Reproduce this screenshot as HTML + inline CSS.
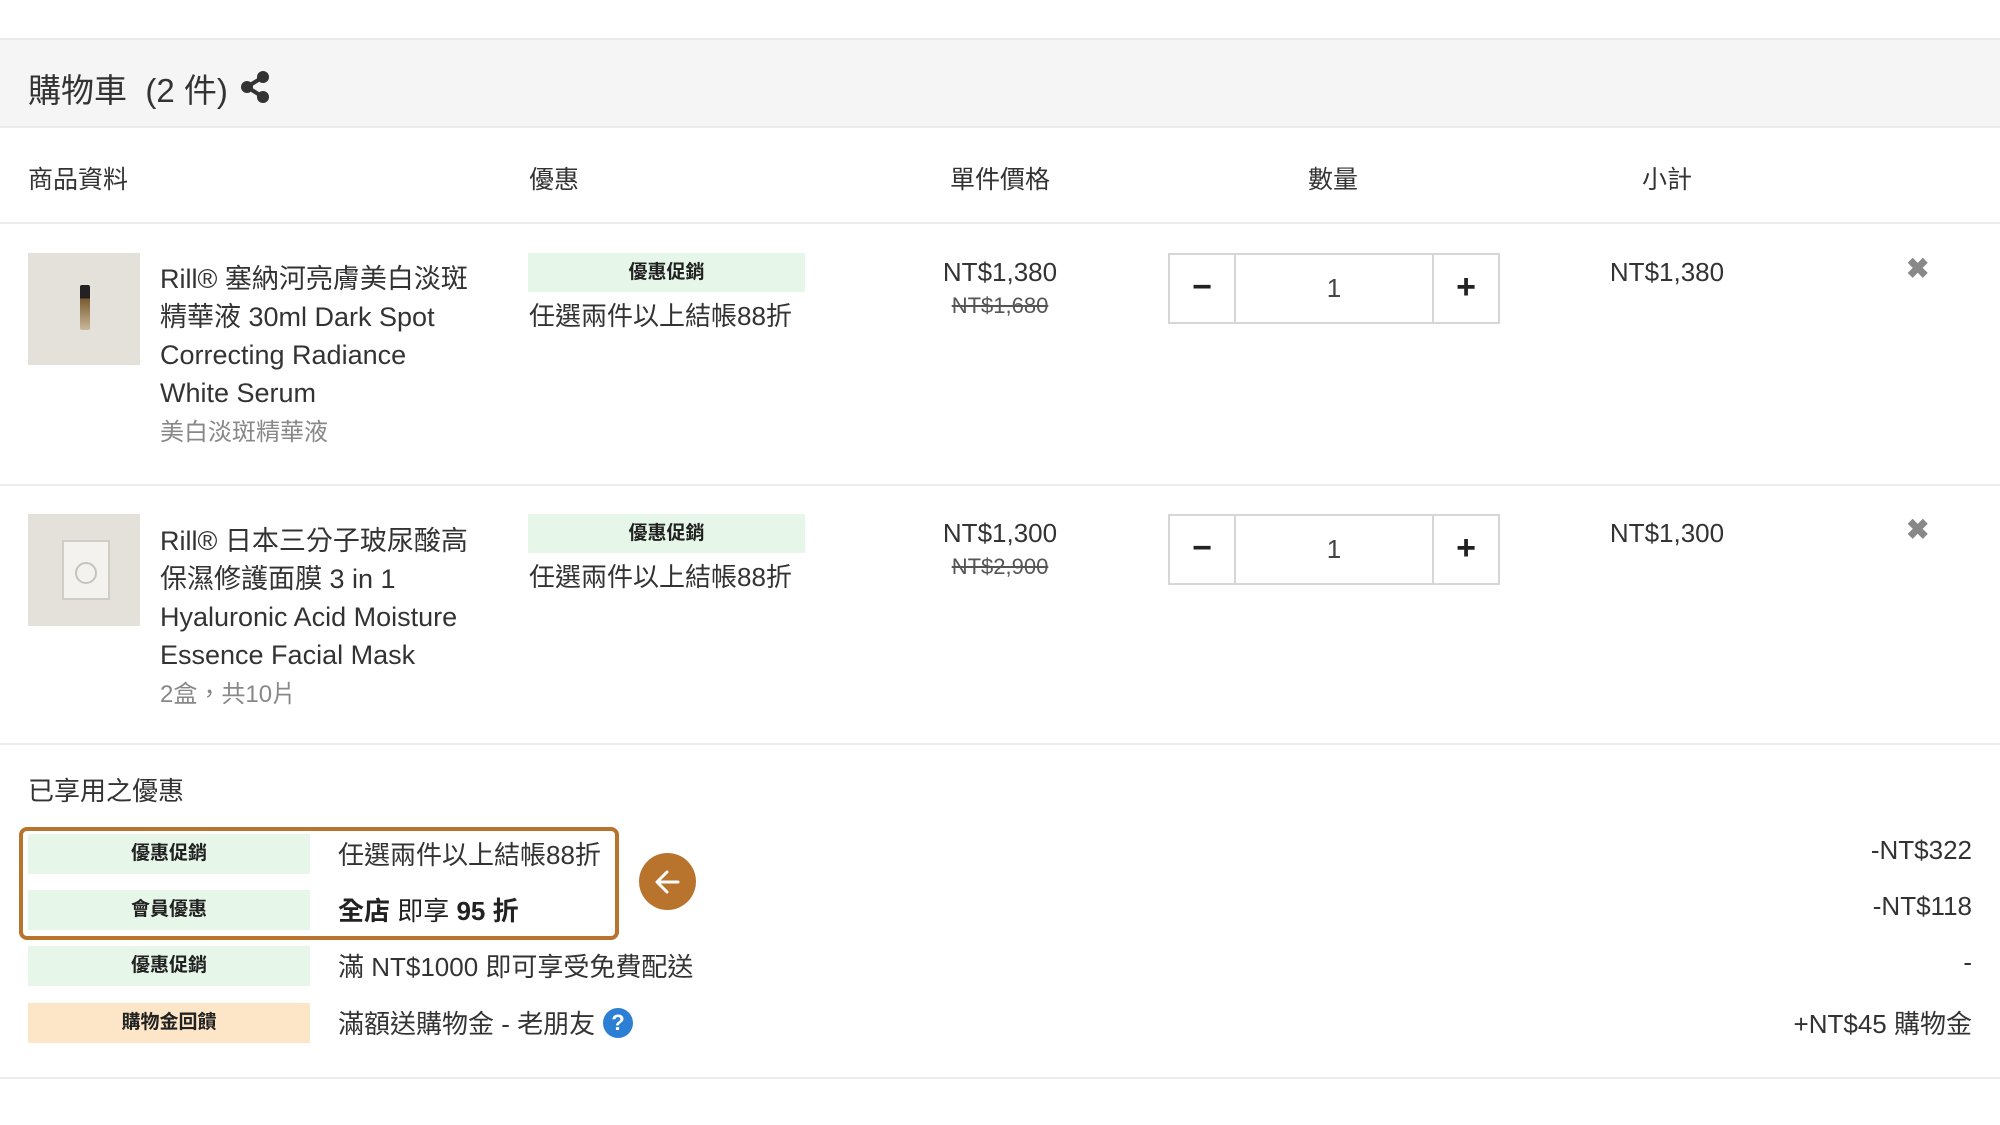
<!DOCTYPE html>
<html><head><meta charset="utf-8"><style>
*{margin:0;padding:0;box-sizing:border-box}
body{width:2000px;height:1125px;background:#fff;font-family:"Liberation Sans","Noto Sans CJK TC",sans-serif;color:#333;position:relative;overflow:hidden}
.a{position:absolute;white-space:nowrap}
.hr{position:absolute;left:0;width:2000px;height:2px;background:#ececec}
.tag{position:absolute;background:#e6f6e9;font-size:19px;font-weight:bold;color:#222;text-align:center}
.c{transform:translateX(-50%)}
.qty{position:absolute;left:1168px;width:332px;height:71px;border:2px solid #d6d6d6;background:#fff}
.qty .m,.qty .p{position:absolute;top:0;width:66px;height:67px;text-align:center;line-height:65px;font-size:34px;font-weight:bold;color:#222}
.qty .m{left:0;border-right:2px solid #d6d6d6}
.qty .p{right:0;border-left:2px solid #d6d6d6}
.qty .n{position:absolute;left:66px;right:66px;top:0;line-height:67px;text-align:center;font-size:26px;color:#444}
.x{position:absolute;left:1906px;font-size:28px;color:#888;font-weight:bold}
.pn{position:absolute;left:160px;font-size:27px;line-height:38px;color:#333;white-space:nowrap}
.sub{color:#888;font-size:24px}
.ltag{position:absolute;left:28px;width:282px;height:40px;font-size:19px;font-weight:bold;color:#222;text-align:center;line-height:40px;background:#e6f6e9}
.lt{position:absolute;left:338px;font-size:26px;color:#333;white-space:nowrap}
.rv{position:absolute;right:28px;font-size:26px;color:#333;white-space:nowrap}
</style></head><body>
<div style="position:absolute;left:0;top:38px;width:2000px;height:90px;background:#f5f5f5;border-top:2px solid #eaeaea;border-bottom:2px solid #eaeaea"></div>
<div class="a" style="left:28px;top:64px;font-size:33px;color:#333">購物車 &nbsp;(2 件)</div>
<svg class="a" style="left:240px;top:70px" width="30" height="34" viewBox="0 0 30 34"><circle cx="23" cy="7" r="6" fill="#333"/><circle cx="7" cy="17" r="6" fill="#333"/><circle cx="23" cy="27" r="6" fill="#333"/><path d="M7 17L23 7M7 17L23 27" stroke="#333" stroke-width="4"/></svg>
<div class="a" style="left:28px;top:160px;font-size:25px">商品資料</div>
<div class="a" style="left:529px;top:160px;font-size:25px">優惠</div>
<div class="a c" style="left:1000px;top:160px;font-size:25px">單件價格</div>
<div class="a c" style="left:1333px;top:160px;font-size:25px">數量</div>
<div class="a c" style="left:1667px;top:160px;font-size:25px">小計</div>
<div class="hr" style="top:222px"></div>

<!-- row1 -->
<div class="a" style="left:28px;top:253px;width:112px;height:112px;background:#e4e1da"></div>
<div class="a" style="left:80px;top:285px;width:10px;height:45px;background:linear-gradient(#222 0 30%,#7a5a30 30%,#c9b89a 100%);border-radius:2px"></div>
<div class="pn" style="top:260px">Rill® 塞納河亮膚美白淡斑<br>精華液 30ml Dark Spot<br>Correcting Radiance<br>White Serum<br><span class="sub">美白淡斑精華液</span></div>
<div class="tag" style="left:528px;top:253px;width:277px;height:39px;line-height:39px">優惠促銷</div>
<div class="a" style="left:529px;top:296px;font-size:26px">任選兩件以上結帳88折</div>
<div class="a c" style="left:1000px;top:257px;font-size:26px">NT$1,380</div>
<div class="a c" style="left:1000px;top:293px;font-size:22px;color:#555;text-decoration:line-through">NT$1,680</div>
<div class="qty" style="top:253px"><div class="m">−</div><div class="n">1</div><div class="p">+</div></div>
<div class="a c" style="left:1667px;top:257px;font-size:26px">NT$1,380</div>
<div class="x" style="top:252px">✖</div>
<div class="hr" style="top:484px"></div>

<!-- row2 -->
<div class="a" style="left:28px;top:514px;width:112px;height:112px;background:#e4e1da"></div>
<div class="a" style="left:62px;top:540px;width:48px;height:60px;background:#f3f2ef;border:2px solid #d0cdc6"></div>
<div class="a" style="left:75px;top:562px;width:22px;height:22px;border:2px solid #c8c4bc;border-radius:50%"></div>
<div class="pn" style="top:522px">Rill® 日本三分子玻尿酸高<br>保濕修護面膜 3 in 1<br>Hyaluronic Acid Moisture<br>Essence Facial Mask<br><span class="sub">2盒，共10片</span></div>
<div class="tag" style="left:528px;top:514px;width:277px;height:39px;line-height:39px">優惠促銷</div>
<div class="a" style="left:529px;top:557px;font-size:26px">任選兩件以上結帳88折</div>
<div class="a c" style="left:1000px;top:518px;font-size:26px">NT$1,300</div>
<div class="a c" style="left:1000px;top:554px;font-size:22px;color:#555;text-decoration:line-through">NT$2,900</div>
<div class="qty" style="top:514px"><div class="m">−</div><div class="n">1</div><div class="p">+</div></div>
<div class="a c" style="left:1667px;top:518px;font-size:26px">NT$1,300</div>
<div class="x" style="top:513px">✖</div>
<div class="hr" style="top:743px"></div>

<!-- used promos -->
<div class="a" style="left:28px;top:771px;font-size:26px">已享用之優惠</div>
<div class="ltag" style="top:834px">優惠促銷</div>
<div class="lt" style="top:835px">任選兩件以上結帳88折</div>
<div class="rv" style="top:835px">-NT$322</div>
<div class="ltag" style="top:890px">會員優惠</div>
<div class="lt" style="top:891px;font-weight:bold;color:#222">全店 <span style="font-weight:normal">即享</span> 95 折</div>
<div class="rv" style="top:891px">-NT$118</div>
<div class="ltag" style="top:946px">優惠促銷</div>
<div class="lt" style="top:947px">滿 NT$1000 即可享受免費配送</div>
<div class="rv" style="top:947px">-</div>
<div class="ltag" style="top:1003px;background:#fde6c8">購物金回饋</div>
<div class="lt" style="top:1004px">滿額送購物金 - 老朋友</div>
<div class="a" style="left:603px;top:1008px;width:30px;height:30px;border-radius:50%;background:#2d7fd3;color:#fff;font-weight:bold;font-size:22px;text-align:center;line-height:30px">?</div>
<div class="rv" style="top:1004px">+NT$45 購物金</div>
<div class="a" style="left:19px;top:827px;width:600px;height:113px;border:4px solid #b8732d;border-radius:8px"></div>
<div class="a" style="left:639px;top:853px;width:57px;height:57px;border-radius:50%;background:#b8732d"></div>
<svg class="a" style="left:652px;top:866px" width="32" height="32" viewBox="0 0 32 32"><path d="M26 16H6M15 6L5 16l10 10" fill="none" stroke="#fff" stroke-width="3" stroke-linecap="round" stroke-linejoin="round"/></svg>
<div class="hr" style="top:1077px"></div>
</body></html>
